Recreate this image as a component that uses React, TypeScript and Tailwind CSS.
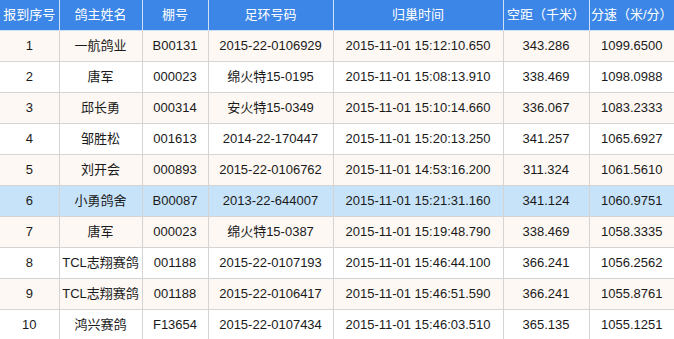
const headers = ['报到序号', '鸽主姓名', '棚号', '足环号码', '归巢时间', '空距（千米）', '分速（米/分）'];

const widths = ['w-[59px]', 'w-[83px]', 'w-[66px]', 'w-[125px]', 'w-[170px]', 'w-[86px]', 'w-[85px]'];

const rows = [
    ['1', '一航鸽业', 'B00131', '2015-22-0106929', '2015-11-01 15:12:10.650', '343.286', '1099.6500'],
    ['2', '唐军', '000023', '绵火特15-0195', '2015-11-01 15:08:13.910', '338.469', '1098.0988'],
    ['3', '邱长勇', '000314', '安火特15-0349', '2015-11-01 15:10:14.660', '336.067', '1083.2333'],
    ['4', '邹胜松', '001613', '2014-22-170447', '2015-11-01 15:20:13.250', '341.257', '1065.6927'],
    ['5', '刘开会', '000893', '2015-22-0106762', '2015-11-01 14:53:16.200', '311.324', '1061.5610'],
    ['6', '小勇鸽舍', 'B00087', '2013-22-644007', '2015-11-01 15:21:31.160', '341.124', '1060.9751'],
    ['7', '唐军', '000023', '绵火特15-0387', '2015-11-01 15:19:48.790', '338.469', '1058.3335'],
    ['8', 'TCL志翔赛鸽', '001188', '2015-22-0107193', '2015-11-01 15:46:44.100', '366.241', '1056.2562'],
    ['9', 'TCL志翔赛鸽', '001188', '2015-22-0106417', '2015-11-01 15:46:51.590', '366.241', '1055.8761'],
    ['10', '鸿兴赛鸽', 'F13654', '2015-22-0107434', '2015-11-01 15:46:03.510', '365.135', '1055.1251'],
];

const highlighted = 5;

export default function App() {
    return (
        <div
            className="w-[674px] h-[339px] overflow-hidden bg-white"
            style={{ fontFamily: '"Liberation Sans", Arial, "Noto Sans CJK SC", sans-serif' }}
        >
            <table className="w-[674px] table-fixed border-collapse text-[13px] text-[#1a1a1a]">
                <colgroup>
                    {widths.map((w, i) => (
                        <col key={i} className={w} />
                    ))}
                </colgroup>
                <thead>
                    <tr className="h-[30px] bg-[#3b86e6] text-white">
                        {headers.map((h, i) => (
                            <th
                                key={i}
                                className="font-normal text-center whitespace-nowrap border-r border-b border-[#cfe0f7] last:border-r-0 px-0"
                            >
                                {h}
                            </th>
                        ))}
                    </tr>
                </thead>
                <tbody>
                    {rows.map((row, r) => {
                        const bg =
                            r === highlighted
                                ? 'bg-[#c7e3f9]'
                                : r % 2 === 0
                                ? 'bg-[#fdf8f4]'
                                : 'bg-white';
                        return (
                            <tr key={r} className={`h-[31px] ${bg}`}>
                                {row.map((cell, c) => (
                                    <td
                                        key={c}
                                        className="text-center whitespace-nowrap border-r border-b border-[#d4d4d4] last:border-r-0 px-0"
                                    >
                                        {cell}
                                    </td>
                                ))}
                            </tr>
                        );
                    })}
                </tbody>
            </table>
        </div>
    );
}
